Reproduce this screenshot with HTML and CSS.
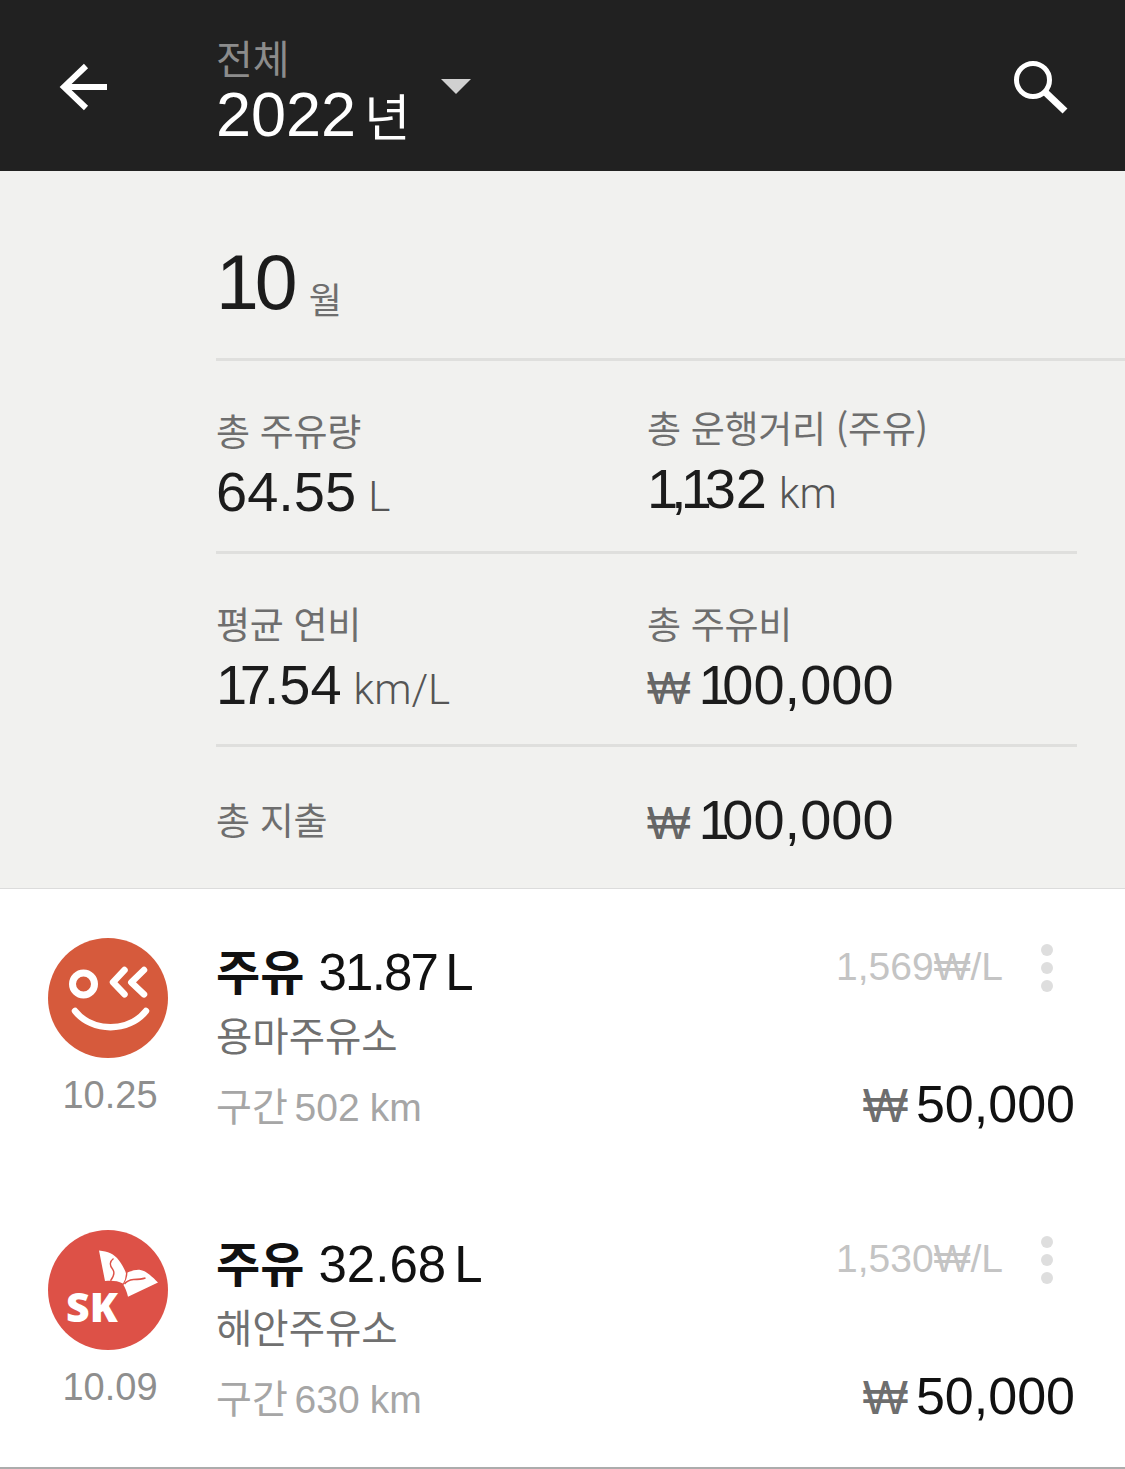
FILE: index.html
```html
<!DOCTYPE html>
<html lang="ko">
<head>
    <meta charset="utf-8">
    <title>주유 내역</title>
    <link rel="stylesheet" href="styles.css">
</head>
<body>
    <div class="header">
        <svg class="back-icon" width="50" height="48" viewBox="0 0 50 48">
            <path d="M48 24H4M27 3L5 24l22 21" fill="none" stroke="#fff" stroke-width="6"/>
        </svg>
        <div class="header-title">
            <div class="header-sub">전체</div>
            <div class="header-year">2022<span class="header-unit">년</span></div>
        </div>
        <div class="caret"></div>
        <svg class="search-icon" width="56" height="54" viewBox="0 0 56 54">
            <circle cx="20" cy="20" r="16.5" fill="none" stroke="#fff" stroke-width="5"/>
            <path d="M32 32l20 19" fill="none" stroke="#fff" stroke-width="7"/>
        </svg>
    </div>

    <div class="summary">
        <div class="month-row">
            <span class="month-num">10</span><span class="month-unit">월</span>
        </div>
        <div class="stat-row">
            <div class="stat">
                <div class="stat-label">총 주유량</div>
                <div class="stat-value">64.55<span class="unit">L</span></div>
            </div>
            <div class="stat stat-up">
                <div class="stat-label">총 운행거리 (주유)</div>
                <div class="stat-value"><span class="one">1</span><span class="comma">,</span><span class="one">1</span>32<span class="unit">km</span></div>
            </div>
        </div>
        <div class="stat-row">
            <div class="stat">
                <div class="stat-label">평균 연비</div>
                <div class="stat-value"><span class="one">17</span>.54<span class="unit">km/L</span></div>
            </div>
            <div class="stat">
                <div class="stat-label">총 주유비</div>
                <div class="stat-value"><span class="won">₩</span><span class="one">1</span>00,000</div>
            </div>
        </div>
        <div class="stat-row stat-row-last">
            <div class="stat-label">총 지출</div>
            <div class="stat-value"><span class="won">₩</span><span class="one">1</span>00,000</div>
        </div>
    </div>

    <div class="list">
        <div class="item">
            <div class="item-left">
                <svg class="logo" width="120" height="120" viewBox="0 0 120 120">
                    <circle cx="60" cy="60" r="60" fill="#d65a3c"/>
                    <circle cx="35.500" cy="46" r="11" fill="none" stroke="#fff" stroke-width="7"/>
                    <path d="M76.500 32L65 44.300l11.500 12M96 32L83.300 44.300 96 56.300" fill="none" stroke="#fff" stroke-width="6.500" stroke-linecap="round" stroke-linejoin="round"/>
                    <path d="M27 73c17 21.500 54 21.500 71 0" fill="none" stroke="#fff" stroke-width="6.500" stroke-linecap="round"/>
                </svg>
                <div class="item-date">10.25</div>
            </div>
            <div class="item-main">
                <div class="item-title"><b>주유</b> <span class="title-tight">31.87</span><span class="item-l">L</span></div>
                <div class="item-station">용마주유소</div>
                <div class="item-range">구간 502<span class="item-km">km</span></div>
            </div>
            <div class="item-right">
                <div class="price-row">
                    <span class="price">1,569₩/L</span>
                    <span class="dots"><i></i><i></i><i></i></span>
                </div>
                <div class="amount"><span class="amount-won">₩</span>50,000</div>
            </div>
        </div>
        <div class="item">
            <div class="item-left">
                <svg class="logo" width="120" height="120" viewBox="0 0 120 120">
                    <circle cx="60" cy="60" r="60" fill="#dd5147"/>
                    <path d="M51 20.500c9 1 15 3 20 10 3 4 6 9 7 13l-1 6-2 4c-6-3-11-3-18-2.500z" fill="#fff"/>
                    <path d="M79.500 42.500c5-2 9-3 13-2.500 6 1 12 7 17.500 12.500L80 66.700c-1-5-3-9-4.500-11.700 2-4 4-8 4-12.500z" fill="#fff"/>
                    <path d="M65.500 28.500c-4 3-4 7-1 10.500 3 4 1 8-2 11.700M76.500 54c2-3 5-4 9-4.500 5 0 9-.500 12-1.500" fill="none" stroke="#dd5147" stroke-width="1.400"/>
                    <text x="18" y="92" class="sk-text">SK</text>
                </svg>
                <div class="item-date">10.09</div>
            </div>
            <div class="item-main">
                <div class="item-title"><b>주유</b> 32.68<span class="item-l">L</span></div>
                <div class="item-station">해안주유소</div>
                <div class="item-range">구간 630<span class="item-km">km</span></div>
            </div>
            <div class="item-right">
                <div class="price-row">
                    <span class="price">1,530₩/L</span>
                    <span class="dots"><i></i><i></i><i></i></span>
                </div>
                <div class="amount"><span class="amount-won">₩</span>50,000</div>
            </div>
        </div>
    </div>
</body>
</html>
```

FILE: styles.css
```css
* {
    box-sizing: border-box;
}
html, body {
    margin: 0;
    padding: 0;
}
body {
    width: 1125px;
    height: 1469px;
    overflow: hidden;
    background-color: #ffffff;
    font-family: "Liberation Sans", "Noto Sans CJK KR", sans-serif;
    color: #1c1c1c;
}
.header {
    display: flex;
    align-items: center;
    height: 171px;
    padding-left: 59px;
    background-color: #212121;
}
.back-icon {
    margin-top: 2px;
    margin-right: 107px;
}
.header-title {
    align-self: flex-start;
    width: 225px;
    padding-top: 32px;
}
.header-sub {
    font-family: "Noto Sans CJK KR", sans-serif;
    font-size: 40px;
    line-height: 50px;
    color: #8c8c8c;
}
.header-year {
    font-size: 63px;
    line-height: 64px;
    color: #ffffff;
}
.header-unit {
    font-size: 50px;
    margin-left: 8px;
}
.caret {
    width: 0;
    height: 0;
    margin-top: 2px;
    border-left: 15px solid transparent;
    border-right: 15px solid transparent;
    border-top: 15px solid #d0d0d0;
}
.search-icon {
    margin-top: 2px;
    margin-left: auto;
    margin-right: 56px;
}
.summary {
    height: 718px;
    padding-left: 216px;
    background-color: #f1f1ef;
    border-bottom: 1px solid #dcdcdc;
}
.month-row {
    display: flex;
    align-items: flex-start;
    height: 190px;
    padding-top: 66px;
    border-bottom: 3px solid #dfdfdd;
}
.month-num {
    font-size: 77px;
    line-height: 90px;
    letter-spacing: -4px;
}
.month-unit {
    margin-top: 41px;
    margin-left: 15px;
    font-family: "Noto Sans CJK KR", sans-serif;
    font-size: 36px;
    line-height: 40px;
    color: #6e6e6e;
}
.stat-row {
    display: grid;
    grid-template-columns: 431px 1fr;
    height: 193px;
    margin-right: 48px;
    padding-top: 44px;
    border-bottom: 3px solid #dfdfdd;
}
.stat-row-last {
    height: 142px;
    padding-top: 2px;
    border-bottom: 0;
    align-items: center;
}
.stat-up {
    margin-top: -3px;
}
.stat-label {
    font-family: "Noto Sans CJK KR", sans-serif;
    font-size: 37px;
    line-height: 50px;
    letter-spacing: -0.3px;
    color: #6e6e6e;
}
.stat-value {
    margin-top: 4px;
    font-size: 56px;
    line-height: 66px;
    color: #1c1c1c;
}
.one {
    letter-spacing: -0.13em;
}
.comma {
    letter-spacing: -0.1em;
}
.unit {
    margin-left: 12px;
    font-family: Roboto, sans-serif;
    font-size: 42px;
    font-weight: 300;
    color: #555555;
}
.won {
    margin-right: 8px;
    font-size: 46px;
    color: #666666;
}
.item {
    display: flex;
    height: 291.5px;
    padding: 49px 50px 0 48px;
}
.item:last-child {
    height: 288.5px;
    border-bottom: 2px solid #acacac;
}
.item-left {
    width: 168px;
}
.logo {
    display: block;
}
.sk-text {
    font-family: "Open Sans", sans-serif;
    font-size: 41px;
    font-weight: 800;
    fill: #ffffff;
}
.item-date {
    width: 124px;
    margin-top: 14px;
    text-align: center;
    font-size: 38px;
    line-height: 46px;
    color: #8e8e8e;
}
.item-main {
    flex: 1;
}
.item-title {
    font-size: 51px;
    line-height: 70px;
    color: #111111;
}
.item-title b {
    font-size: 48px;
    font-weight: 700;
}
.title-tight {
    letter-spacing: -0.035em;
}
.item-l {
    margin-left: 8px;
}
.item-station {
    margin-top: -3px;
    font-family: "Noto Sans CJK KR", sans-serif;
    font-size: 39.5px;
    line-height: 56px;
    color: #707070;
}
.item-range {
    margin-top: 21px;
    font-size: 39px;
    line-height: 50px;
    word-spacing: -4px;
    color: #a6a6a6;
}
.item-km {
    margin-left: 10px;
}
.item-right {
    display: flex;
    flex-direction: column;
    align-items: flex-end;
}
.price-row {
    display: flex;
    align-items: center;
    height: 60px;
    margin-right: 22px;
}
.price {
    margin-right: 38px;
    margin-bottom: 2px;
    font-size: 39px;
    color: #c4c4c4;
}
.dots {
    display: flex;
    flex-direction: column;
    gap: 6px;
    width: 12px;
}
.dots i {
    display: block;
    width: 12px;
    height: 12px;
    border-radius: 50%;
    background-color: #dedede;
}
.amount {
    margin-top: 73px;
    font-size: 52px;
    line-height: 66px;
    color: #111111;
}
.amount-won {
    margin-right: 8px;
    font-size: 48px;
    color: #6e6e6e;
}
```
